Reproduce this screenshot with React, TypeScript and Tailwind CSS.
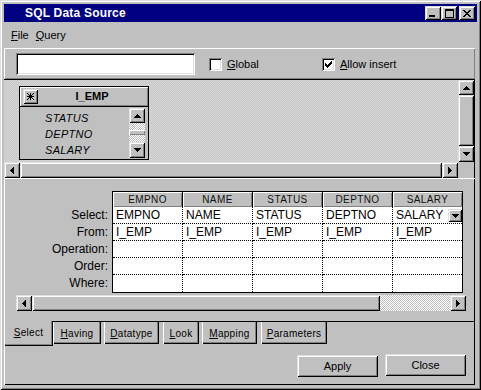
import React from "react";

type Dir = "up" | "down" | "left" | "right";

const bevel =
  "shadow-[inset_1px_1px_#dfdfdf,inset_-1px_-1px_#000,inset_2px_2px_#fff,inset_-2px_-2px_#808080]";
const bevelThin = "shadow-[inset_1px_1px_#fff,inset_-1px_-1px_#808080]";
const sunken =
  "shadow-[inset_1px_1px_#808080,inset_-1px_-1px_#fff,inset_2px_2px_#000,inset_-2px_-2px_#dfdfdf]";
const checker =
  "bg-[image:repeating-conic-gradient(#c0c0c0_0%_25%,#ffffff_0%_50%)] bg-[length:2px_2px]";
const canvas =
  "bg-[image:repeating-conic-gradient(#c8c8c8_0%_25%,#d6d6d6_0%_50%)] bg-[length:2px_2px]";

function Pixels({ rows }: { rows: string[] }) {
  const w = rows[0].length;
  const h = rows.length;
  return (
    <svg width={w} height={h} viewBox={`0 0 ${w} ${h}`} shapeRendering="crispEdges">
      {rows.flatMap((r, y) =>
        r.split("").map((c, x) =>
          c === "#" ? <rect key={`${x}-${y}`} x={x} y={y} width={1} height={1} fill="#000" /> : null
        )
      )}
    </svg>
  );
}

const arrows: Record<Dir, string[]> = {
  up: ["...#...", "..###..", ".#####.", "#######"],
  down: ["#######", ".#####.", "..###..", "...#..."],
  left: ["...#", "..##", ".###", "####", ".###", "..##", "...#"],
  right: ["#...", "##..", "###.", "####", "###.", "##..", "#..."],
};

const checkMark = [
  "......#",
  ".....##",
  "#...###",
  "##.###.",
  "#####..",
  ".###...",
  "..#....",
];

const star = [
  "#..#..#",
  ".#.#.#.",
  "..###..",
  "#######",
  "..###..",
  ".#.#.#.",
  "#..#..#",
];

function Btn({ size, children }: { size: string; children: React.ReactNode }) {
  return (
    <div className={`${size} shrink-0 bg-[#c0c0c0] ${bevel} flex items-center justify-center`}>
      {children}
    </div>
  );
}

function ScrollBtn({ dir, size = "w-[16px] h-[16px]" }: { dir: Dir; size?: string }) {
  return (
    <Btn size={size}>
      <Pixels rows={arrows[dir]} />
    </Btn>
  );
}

function Check({ checked }: { checked?: boolean }) {
  return (
    <div className={`w-[13px] h-[13px] shrink-0 bg-white ${sunken} flex items-center justify-center`}>
      {checked && <Pixels rows={checkMark} />}
    </div>
  );
}

const columns = ["EMPNO", "NAME", "STATUS", "DEPTNO", "SALARY"];
const rowLabels = ["Select:", "From:", "Operation:", "Order:", "Where:"];

const tabs = [
  { k: "H", rest: "aving", w: "w-[48px]", gap: "ml-0" },
  { k: "D", rest: "atatype", w: "w-[55px]", gap: "ml-[3px]" },
  { k: "L", rest: "ook", w: "w-[36px]", gap: "ml-[4px]" },
  { k: "M", rest: "apping", w: "w-[55px]", gap: "ml-[3px]" },
  { k: "P", rest: "arameters", w: "w-[66px]", gap: "ml-[4px]" },
];

export default function App() {
  return (
    <div className="w-[481px] h-[390px] bg-[#c0c0c0] p-[4px] flex flex-col font-['Liberation_Sans',Arial,sans-serif] text-black select-none shadow-[inset_1px_1px_#dfdfdf,inset_-1px_-1px_#000,inset_2px_2px_#fff,inset_-2px_-2px_#808080]">
      {/* title bar */}
      <div className="h-[18px] shrink-0 bg-[#000080] flex items-center pl-[21px] pr-[2px]">
        <span className="flex-1 text-white font-bold text-[12px] leading-none tracking-[0.2px]">
          SQL Data Source
        </span>
        <div className="flex">
          <Btn size="w-[16px] h-[14px]">
            <div className="self-end pb-[3px] pr-[2px]">
              <Pixels rows={["######", "######"]} />
            </div>
          </Btn>
          <Btn size="w-[16px] h-[14px]">
            <Pixels
              rows={[
                "#########",
                "#########",
                "#.......#",
                "#.......#",
                "#.......#",
                "#.......#",
                "#.......#",
                "#.......#",
                "#########",
              ]}
            />
          </Btn>
          <div className="w-[2px]" />
          <Btn size="w-[16px] h-[14px]">
            <Pixels
              rows={[
                "##....##",
                ".##..##.",
                "..####..",
                "...##...",
                "..####..",
                ".##..##.",
                "##....##",
              ]}
            />
          </Btn>
        </div>
      </div>

      {/* menu */}
      <div className="h-[26px] shrink-0 flex items-center gap-[7px] pl-[7px] text-[11px]">
        <span>
          <span className="underline">F</span>ile
        </span>
        <span>
          <span className="underline">Q</span>uery
        </span>
      </div>

      {/* main panel */}
      <div className="flex-1 mr-[2px] mb-[1px] flex flex-col shadow-[inset_1px_1px_#fff,inset_-1px_-1px_#000]">
        {/* toolbar */}
        <div className={`h-[32px] shrink-0 flex items-center pt-[1px] ${bevelThin} border-b border-black`}>
          <div className={`ml-[12px] w-[179px] h-[22px] bg-white ${sunken}`} />
          <div className="ml-[14px] w-[113px] flex items-center text-[11px]">
            <Check />
            <span className="ml-[5px]">
              <span className="underline">G</span>lobal
            </span>
          </div>
          <div className="flex items-center text-[11px]">
            <Check checked />
            <span className="ml-[5px]">
              <span className="underline">A</span>llow insert
            </span>
          </div>
        </div>

        {/* upper pane */}
        <div className="h-[98px] shrink-0 flex">
          <div className="flex-1 flex flex-col">
            <div className={`flex-1 ${canvas} pl-[15px] pt-[6px]`}>
              <div className="w-[130px] h-[74px] border border-black bg-[#c0c0c0] flex flex-col">
                <div className={`h-[19px] shrink-0 flex items-center pl-[3px] ${bevelThin}`}>
                  <Btn size="w-[15px] h-[15px]">
                    <Pixels rows={star} />
                  </Btn>
                  <span className="flex-1 text-center font-bold text-[11px] pr-[2px]">I_EMP</span>
                </div>
                <div className="flex-1 border-t border-black flex">
                  <div className="flex-1 pl-[25px] pt-[3px] italic text-[11px] tracking-[0.3px]">
                    {["STATUS", "DEPTNO", "SALARY"].map((f) => (
                      <div key={f} className="h-[16px] leading-[16px]">
                        {f}
                      </div>
                    ))}
                  </div>
                  <div className="w-[16px] mr-[3px] mt-[1px] flex flex-col">
                    <ScrollBtn dir="up" size="w-[16px] h-[15px]" />
                    <div className={`h-[19px] ${checker} flex flex-col justify-center`}>
                      <div className={`h-[5px] bg-[#c0c0c0] ${bevelThin}`} />
                    </div>
                    <ScrollBtn dir="down" />
                  </div>
                </div>
              </div>
            </div>
            <div className="h-[16px] shrink-0 flex">
              <ScrollBtn dir="left" />
              <div className={`flex-1 bg-[#c0c0c0] ${bevel}`} />
              <ScrollBtn dir="right" />
            </div>
          </div>
          <div className="w-[16px] shrink-0 flex flex-col mr-[1px]">
            <ScrollBtn dir="up" size="w-[16px] h-[15px]" />
            <div className={`flex-1 bg-[#c0c0c0] ${bevel}`} />
            <ScrollBtn dir="down" />
            <div className="h-[16px] bg-[#c0c0c0]" />
          </div>
        </div>

        {/* separator */}
        <div className="h-[3px] shrink-0 border-t border-white" />

        {/* lower pane (tab page) */}
        <div className="h-[140px] shrink-0 flex flex-col pt-[10px] shadow-[inset_1px_0_#fff]">
          <div className="flex">
            <div className="w-[104px] shrink-0 pt-[16px] text-right text-[12px]">
              {rowLabels.map((l) => (
                <div key={l} className="h-[17px] leading-[17px]">
                  {l}
                </div>
              ))}
            </div>
            <div className="ml-[4px] border border-black bg-white">
              <div className="flex h-[15px] bg-[#c0c0c0]">
                {columns.map((c, ci) => (
                  <div
                    key={c}
                    className={`${ci < columns.length - 1 ? "w-[70px] border-r border-black" : "w-[69px]"} ${bevelThin} flex items-center justify-center text-[10px] tracking-[0.4px] text-[#111]`}
                  >
                    {c}
                  </div>
                ))}
              </div>
              {rowLabels.map((l, ri) => (
                <div key={l} className="flex h-[17px]">
                  {columns.map((c, ci) => (
                    <div
                      key={c}
                      className={`${ci < columns.length - 1 ? "w-[70px] border-r" : "w-[69px]"} ${
                        ri < rowLabels.length - 1 ? "border-b" : ""
                      } border-dotted border-black h-[17px] relative pl-[3px] text-[12px] leading-[16px]`}
                    >
                      {ri === 0 ? c : ri === 1 ? "I_EMP" : ""}
                      {ri === 0 && ci === columns.length - 1 && (
                        <div className="absolute right-0 top-[2px]">
                          <ScrollBtn dir="down" size="w-[14px] h-[13px]" />
                        </div>
                      )}
                    </div>
                  ))}
                </div>
              ))}
            </div>
          </div>
          <div className="ml-[12px] mt-[2px] w-[450px] h-[16px] flex">
            <ScrollBtn dir="left" />
            <div className={`w-[348px] bg-[#c0c0c0] ${bevel}`} />
            <div className={`flex-1 ${checker}`} />
            <ScrollBtn dir="right" />
          </div>
        </div>

        {/* tabs */}
        <div className="h-[25px] shrink-0 flex items-start text-[10px] tracking-[0.3px]">
          <div className="w-[49px] h-[25px] flex items-center justify-center pb-[2px] shadow-[inset_1px_0_#fff,inset_-1px_-1px_#000,inset_-2px_-2px_#808080]">
            <span>
              <span className="underline">S</span>elect
            </span>
          </div>
          <div className="flex-1 flex border-t border-black mr-[1px]">
            {tabs.map((t) => (
              <div
                key={t.k}
                className={`${t.w} ${t.gap} h-[22px] flex items-center justify-center shadow-[inset_1px_0_#fff,inset_-1px_-1px_#000,inset_-2px_-2px_#808080]`}
              >
                <span>
                  <span className="underline">{t.k}</span>
                  {t.rest}
                </span>
              </div>
            ))}
          </div>
        </div>

        {/* buttons */}
        <div className="flex-1 flex justify-end items-start gap-[7px] pr-[9px] pt-[8px] text-[11px]">
          <div className="mt-[1px]">
            <Btn size="w-[81px] h-[22px]">Apply</Btn>
          </div>
          <Btn size="w-[81px] h-[22px]">Close</Btn>
        </div>
      </div>
    </div>
  );
}
